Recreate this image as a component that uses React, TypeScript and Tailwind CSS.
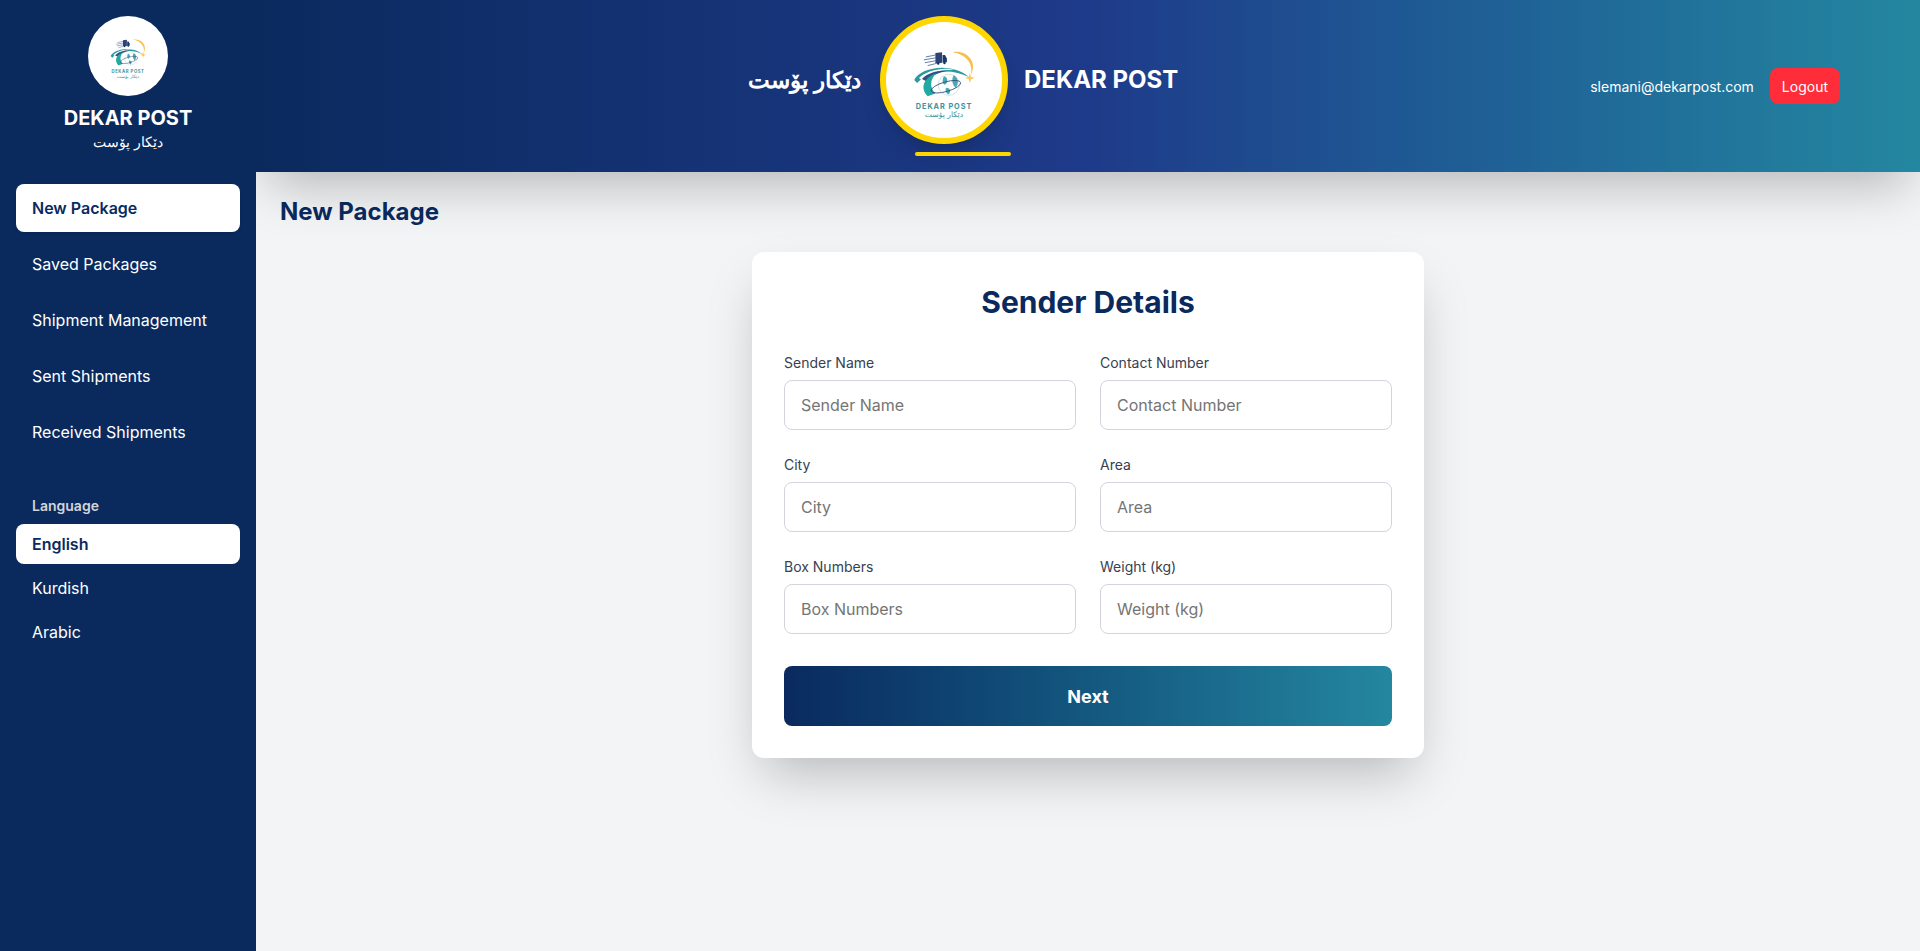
function Logo({ size }: { size: number }) {
  return (
    <svg width={size} height={size} viewBox="0 0 100 100" className="block">
      {/* speed lines */}
      <path d="M31 26 L41 24 M29 29 L41 27 M30 32 L41 30 M33 35 L41 33" stroke="#5f78a8" strokeWidth="1" fill="none" />
      {/* truck */}
      <path d="M41 22 L48 21 L48 32 L41 33 Z" fill="#2a4478" />
      <path d="M48.5 24 L51 24 L53 27.5 L53 31.5 L48.5 32 Z" fill="#1c3768" />
      <circle cx="44" cy="33" r="1.2" fill="#0a2a5e" />
      <circle cx="50.5" cy="32.5" r="1.2" fill="#0a2a5e" />
      {/* sun arc */}
      <path d="M59 21 C72 18 86 30 78 45 C81 32 72 23 59 21 Z" fill="#f6c04f" />
      {/* swooshes */}
      <path d="M19 50 C25 37 58 31 76 47 C58 38 36 39 22 53 Z" fill="#2a9aa2" />
      <path d="M24 48 C31 40 50 36 62 39.5 C48 38.5 36 42 27 50.5 Z" fill="#ffffff" />
      <path d="M27 49 C33 42 45 39.5 54 40.5 C45 42 37 45 31 51 Z" fill="#34507f" />
      <path d="M33 67 C25 59 28 48 42 43 C35 50 35 58 41 64 Z" fill="#22aaa2" />
      {/* globe */}
      <circle cx="55" cy="55" r="11" fill="none" stroke="#b5d8de" strokeWidth="0.7" />
      <path d="M50 46 C54 47 55 52 51 55 C48 54 48 49 50 46 Z M60 45 C65 47 66 54 62 58 C58 54 58 49 60 45 Z M52 58 C56 58 58 61 55 65 C52 64 51 61 52 58 Z" fill="#4aa9b0" />
      <ellipse cx="52" cy="57" rx="16" ry="5" transform="rotate(-16 52 57)" fill="none" stroke="#2a4478" strokeWidth="0.8" />
      {/* star */}
      <path d="M77 43 L78 47 L82 48 L78 49 L77 53 L76 49 L72 48 L76 47 Z" fill="#f7b733" />
      <circle cx="77" cy="48" r="1.6" fill="#fbd24e" />
      <text x="50" y="80.5" textAnchor="middle" fontSize="7.6" fontWeight="700" letterSpacing="1" fill="#3a939c" fontFamily="Inter, sans-serif">DEKAR POST</text>
      <text x="50" y="89" textAnchor="middle" fontSize="8" fill="#3a939c" fontFamily="'DejaVu Sans', sans-serif">دێکار پۆست</text>
    </svg>
  );
}

const inputs = [
  "Sender Name",
  "Contact Number",
  "City",
  "Area",
  "Box Numbers",
  "Weight (kg)",
];

const nav = ["Saved Packages", "Shipment Management", "Sent Shipments", "Received Shipments"];

export default function App() {
  return (
    <div className="flex h-[951px] overflow-hidden bg-[#f3f4f6] text-white font-['Inter',_sans-serif]">
      <aside className="w-[256px] shrink-0 bg-[#0a2a5e] px-4 z-20">
        <div className="h-[172px] pt-4 flex flex-col items-center">
          <div className="w-20 h-20 rounded-full bg-white flex items-center justify-center">
            <Logo size={56} />
          </div>
          <div className="mt-[8px] text-[20px] leading-[28px] font-bold">DEKAR POST</div>
          <div className="text-[13.6px] leading-[20px]">دێکار پۆست</div>
        </div>
        <nav className="mt-[12px] flex flex-col gap-2">
          <div className="h-[48px] rounded-lg bg-white px-4 flex items-center text-[16px] font-semibold text-[#0a2a5e] shadow-sm">New Package</div>
          {nav.map((n) => (
            <div key={n} className="h-[48px] rounded-lg px-4 flex items-center text-[16px] font-normal">{n}</div>
          ))}
        </nav>
        <div className="mt-[40px] px-4 text-[14px] leading-[20px] font-semibold text-[#d1d5db]">Language</div>
        <div className="mt-[8px] flex flex-col gap-1">
          <div className="h-[40px] rounded-lg bg-white px-4 flex items-center text-[16px] font-semibold text-[#0a2a5e]">English</div>
          <div className="h-[40px] px-4 flex items-center text-[16px] font-normal">Kurdish</div>
          <div className="h-[40px] px-4 flex items-center text-[16px] font-normal">Arabic</div>
        </div>
      </aside>
      <div className="flex-1 flex flex-col min-w-0">
        <header className="h-[172px] shrink-0 relative z-10 bg-gradient-to-r from-[#0a2a5e] via-[#1e3a8a] to-[#2487a0] shadow-[0_25px_50px_-12px_rgba(0,0,0,0.25)] flex items-center justify-between pl-[492px] pr-[80px]">
          <div className="flex items-start gap-4 h-full pt-4">
            <div className="w-[116px] h-[128px] flex items-center justify-end pr-[3px] whitespace-nowrap text-[23.3px] font-semibold">دێکار پۆست</div>
            <div className="relative">
              <div className="w-[128px] h-[128px] rounded-full bg-white border-[6px] border-[#ffd600] flex items-center justify-center shadow-xl">
                <Logo size={96} />
              </div>
              <div className="absolute left-[35px] -bottom-[12px] w-[96px] h-1 rounded-full bg-[#ffd600]" />
            </div>
            <div className="h-[128px] flex items-center text-[24px] font-bold">DEKAR POST</div>
          </div>
          <div className="flex items-center gap-4">
            <div className="text-[14px]">slemani@dekarpost.com</div>
            <button className="h-[36px] px-3 rounded-lg bg-[#ff2d3a] text-[14px] font-normal">Logout</button>
          </div>
        </header>
        <main className="flex-1 px-6 py-6">
          <h1 className="text-[24px] leading-[32px] font-bold text-[#0a2a5e]">New Package</h1>
          <div className="mt-[24px] mx-auto w-[672px] bg-white rounded-xl shadow-2xl p-8">
            <h2 className="text-[30px] leading-[36px] font-bold text-center text-[#0a2a5e]">Sender Details</h2>
            <div className="mt-[33px] grid grid-cols-2 gap-x-6 gap-y-[25px]">
              {inputs.map((l) => (
                <label key={l} className="block">
                  <span className="block text-[14px] leading-[20px] font-normal text-[#374151] mb-[7px]">{l}</span>
                  <input placeholder={l} className="w-full h-[50px] rounded-lg border border-[#d1d5db] px-4 text-[16px] placeholder:text-[#757575] outline-none" />
                </label>
              ))}
            </div>
            <button className="mt-8 w-full h-[60px] rounded-lg bg-gradient-to-r from-[#0a2a5e] to-[#2487a0] text-[18px] font-bold">Next</button>
          </div>
        </main>
      </div>
    </div>
  );
}
